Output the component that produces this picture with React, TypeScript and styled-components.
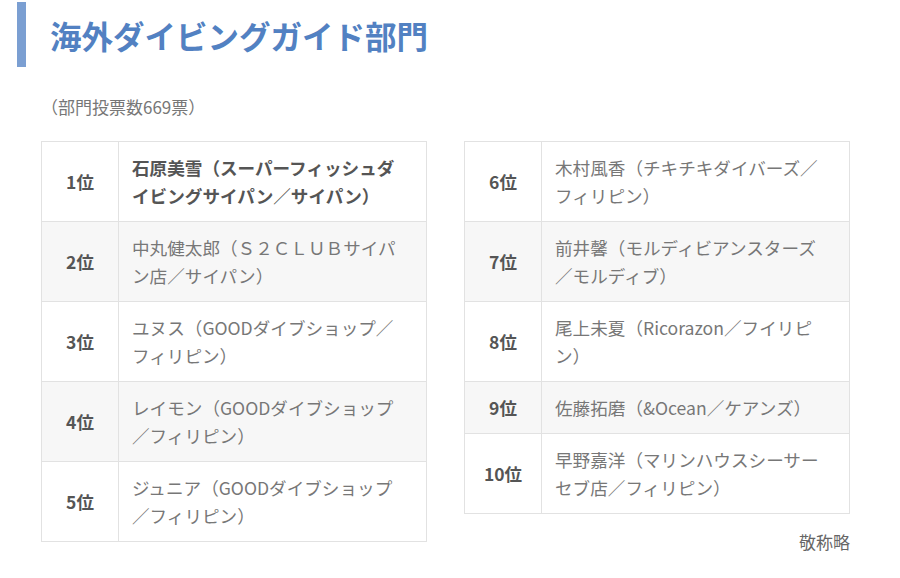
import React from 'react';
import styled, { createGlobalStyle } from 'styled-components';

const GlobalStyle = createGlobalStyle`
  body {
    margin: 0;
    background: #fff;
    font-family: "Noto Sans CJK JP", "Noto Sans", sans-serif;
  }
`;

type Entry = { rank: string; lines: string[]; bold?: boolean };

const leftEntries: Entry[] = [
  { rank: '1位', lines: ['石原美雪（スーパーフィッシュダ', 'イビングサイパン／サイパン）'], bold: true },
  { rank: '2位', lines: ['中丸健太郎（Ｓ２ＣＬＵＢサイパ', 'ン店／サイパン）'] },
  { rank: '3位', lines: ['ユヌス（GOODダイブショップ／', 'フィリピン）'] },
  { rank: '4位', lines: ['レイモン（GOODダイブショップ', '／フィリピン）'] },
  { rank: '5位', lines: ['ジュニア（GOODダイブショップ', '／フィリピン）'] },
];

const rightEntries: Entry[] = [
  { rank: '6位', lines: ['木村風香（チキチキダイバーズ／', 'フィリピン）'] },
  { rank: '7位', lines: ['前井馨（モルディビアンスターズ', '／モルディブ）'] },
  { rank: '8位', lines: ['尾上未夏（Ricorazon／フイリピ', 'ン）'] },
  { rank: '9位', lines: ['佐藤拓磨（&Ocean／ケアンズ）'] },
  { rank: '10位', lines: ['早野嘉洋（マリンハウスシーサー', 'セブ店／フィリピン）'] },
];

const Page = styled.div`
  width: 900px;
  height: 578px;
  overflow: hidden;
`;

const Header = styled.div`
  display: flex;
  align-items: center;
  margin: 2px 0 0 17px;
`;

const Bar = styled.div`
  width: 9px;
  height: 65px;
  background: #7b9fd2;
`;

const Title = styled.h2`
  margin: 0 0 0 24px;
  font-size: 31.5px;
  font-weight: 700;
  color: #5281c2;
`;

const Body = styled.div`
  margin-left: 41px;
  width: 809px;
`;

const Votes = styled.p`
  margin: 26px 0 0 0;
  font-size: 17px;
  line-height: 28px;
  color: #777;
`;

const Columns = styled.div`
  display: flex;
  justify-content: space-between;
  align-items: flex-start;
  margin-top: 20px;
`;

const Table = styled.table`
  width: 386px;
  border-collapse: collapse;
  border: 1px solid #e2e2e2;
`;

const Row = styled.tr<{ $shaded: boolean }>`
  background: ${p => (p.$shaded ? '#f7f7f7' : '#fff')};
  border-top: 1px solid #e2e2e2;
`;

const RankCell = styled.td`
  width: 76px;
  padding: 0;
  text-align: center;
  font-size: 17.5px;
  font-weight: 700;
  color: #555;
  border-right: 1px solid #e2e2e2;
`;

const NameCell = styled.td<{ $bold?: boolean }>`
  padding: 12px 8px 11px 13px;
  font-size: 17.6px;
  line-height: 28px;
  white-space: nowrap;
  font-weight: ${p => (p.$bold ? 700 : 400)};
  color: ${p => (p.$bold ? '#555' : '#777')};
`;

const Note = styled.p`
  margin: 14px 0 0 0;
  text-align: right;
  font-size: 17px;
  line-height: 28px;
  color: #666;
`;

function Ranking({ entries }: { entries: Entry[] }) {
  return (
    <Table>
      <tbody>
        {entries.map((e, i) => (
          <Row key={e.rank} $shaded={i % 2 === 1}>
            <RankCell>{e.rank}</RankCell>
            <NameCell $bold={e.bold}>
              {e.lines.map((line, j) => (
                <React.Fragment key={j}>
                  {j > 0 && <br />}
                  {line}
                </React.Fragment>
              ))}
            </NameCell>
          </Row>
        ))}
      </tbody>
    </Table>
  );
}

export default function App() {
  return (
    <Page>
      <GlobalStyle />
      <Header>
        <Bar />
        <Title>海外ダイビングガイド部門</Title>
      </Header>
      <Body>
        <Votes>（部門投票数669票）</Votes>
        <Columns>
          <Ranking entries={leftEntries} />
          <div>
            <Ranking entries={rightEntries} />
            <Note>敬称略</Note>
          </div>
        </Columns>
      </Body>
    </Page>
  );
}
